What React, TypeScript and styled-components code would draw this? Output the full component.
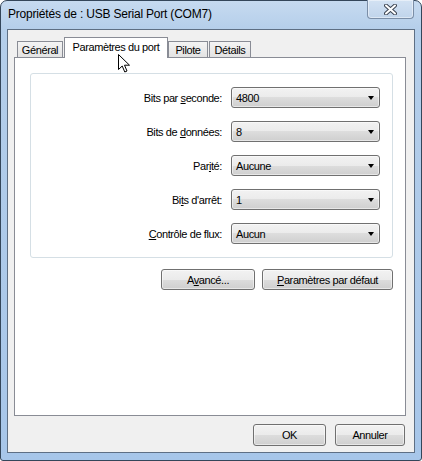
import React from "react";
import styled, { createGlobalStyle } from "styled-components";

const GlobalStyle = createGlobalStyle`
  html, body {
    margin: 0;
    padding: 0;
    background: #ffffff;
  }
  body {
    font-family: "Liberation Sans", Arial, sans-serif;
    font-size: 11px;
    color: #000000;
  }
  * {
    box-sizing: border-box;
  }
`;

const Window = styled.div`
  position: relative;
  width: 422px;
  height: 461px;
  display: flex;
  flex-direction: column;
  padding: 0 6px 7px 6px;
  border: 1px solid #34465a;
  border-radius: 7px 7px 3px 3px;
  background: linear-gradient(#c6daf0, #b4ceea 30px, #a7c6e9);
`;

const TitleBar = styled.div`
  height: 28px;
  display: flex;
  align-items: flex-start;
`;

const Caption = styled.span`
  margin: 6px 0 0 1px;
  font-size: 12px;
  line-height: 14px;
  letter-spacing: -0.2px;
  color: #000000;
`;

const CloseButton = styled.div`
  margin: -1px 1px 0 auto;
  width: 47px;
  height: 19px;
  display: flex;
  align-items: center;
  justify-content: center;
  border: 1px solid #7b8ea7;
  border-top: none;
  border-radius: 0 0 4px 4px;
  background: linear-gradient(#d3e2f3, #c0d4eb);
  box-shadow: inset 0 0 0 1px rgba(255, 255, 255, 0.45);
`;

const Client = styled.div`
  flex: 1;
  display: flex;
  flex-direction: column;
  border: 1px solid #5e6f84;
  background: #f0f0f0;
  padding: 7px 8px 6px 6px;
`;

const TabStrip = styled.div`
  height: 20px;
  display: flex;
  align-items: flex-end;
  padding-left: 3px;
`;

const Tab = styled.div<{ $active?: boolean; $w: number }>`
  position: relative;
  width: ${({ $w }) => $w}px;
  height: ${({ $active }) => ($active ? "21px" : "16px")};
  margin-bottom: ${({ $active }) => ($active ? "-1px" : "0")};
  margin-right: ${({ $active }) => ($active ? "0" : "1px")};
  padding-bottom: ${({ $active }) => ($active ? "3px" : "0")};
  display: flex;
  align-items: center;
  justify-content: center;
  border: 1px solid #898c95;
  border-bottom: none;
  background: ${({ $active }) =>
    $active ? "#ffffff" : "linear-gradient(#f4f4f4, #e3e3e3)"};
  z-index: ${({ $active }) => ($active ? 1 : 0)};
  letter-spacing: -0.4px;
  white-space: nowrap;
`;

const Panel = styled.div`
  flex: 1;
  display: flex;
  flex-direction: column;
  border: 1px solid #898c95;
  background: #ffffff;
  padding: 15px 12px 0 15px;
`;

const GroupBox = styled.div`
  display: grid;
  grid-template-columns: 1fr 149px;
  column-gap: 9px;
  row-gap: 13px;
  align-items: center;
  padding: 13px 12px 13px 0;
  border: 1px solid #d5dfe5;
  border-radius: 3px;
`;

const Label = styled.label`
  text-align: right;
  letter-spacing: -0.4px;
  white-space: nowrap;
`;

const Key = styled.span`
  text-decoration: underline;
`;

const Combo = styled.div`
  height: 21px;
  display: flex;
  align-items: center;
  justify-content: space-between;
  padding: 0 5px 0 4px;
  border: 1px solid #707070;
  border-radius: 3px;
  background: linear-gradient(#f2f2f2 0%, #ebebeb 50%, #dddddd 50%, #cfcfcf 100%);
  box-shadow: inset 0 0 0 1px rgba(255, 255, 255, 0.5);
  letter-spacing: -0.4px;
`;

const Arrow = styled.span`
  width: 1px;
  height: 0;
  margin-top: 1px;
  border-left: 3px solid transparent;
  border-right: 3px solid transparent;
  border-top: 4px solid #000000;
`;

const ButtonRow = styled.div<{ $top: number; $gap: number; $right: number }>`
  display: flex;
  justify-content: flex-end;
  gap: ${({ $gap }) => $gap}px;
  margin-top: ${({ $top }) => $top}px;
  padding-right: ${({ $right }) => $right}px;
`;

const Button = styled.button<{ $w: number; $h: number }>`
  width: ${({ $w }) => $w}px;
  height: ${({ $h }) => $h}px;
  padding: 0;
  border: 1px solid #707070;
  border-radius: 3px;
  background: linear-gradient(#f2f2f2 0%, #ebebeb 50%, #dddddd 50%, #cfcfcf 100%);
  box-shadow: inset 0 0 0 1px rgba(255, 255, 255, 0.5);
  font-family: inherit;
  font-size: 11px;
  letter-spacing: -0.4px;
  color: #000000;
`;

const Pointer = styled.svg`
  position: absolute;
  left: 117px;
  top: 53px;
  z-index: 5;
`;

const fields = [
  { label: <>Bits par <Key>s</Key>econde:</>, value: "4800" },
  { label: <>Bits de <Key>d</Key>onnées:</>, value: "8" },
  { label: <>Par<Key>i</Key>té:</>, value: "Aucune" },
  { label: <>Bi<Key>t</Key>s d'arrêt:</>, value: "1" },
  { label: <><Key>C</Key>ontrôle de flux:</>, value: "Aucun" },
];

const App = () => {
  return (
    <>
      <GlobalStyle />
      <Window>
        <TitleBar>
          <Caption>Propriétés de : USB Serial Port (COM7)</Caption>
          <CloseButton>
            <svg width="13" height="11" viewBox="0 0 13 11">
              <path d="M2 1.5 L11 9.5 M11 1.5 L2 9.5" stroke="#3c4452" strokeWidth="4" strokeLinecap="round" />
              <path d="M2 1.5 L11 9.5 M11 1.5 L2 9.5" stroke="#ffffff" strokeWidth="2" strokeLinecap="round" />
            </svg>
          </CloseButton>
        </TitleBar>
        <Client>
          <TabStrip>
            <Tab $w={46}>Général</Tab>
            <Tab $w={104} $active>Paramètres du port</Tab>
            <Tab $w={40}>Pilote</Tab>
            <Tab $w={42}>Détails</Tab>
          </TabStrip>
          <Panel>
            <GroupBox>
              {fields.map((f, i) => (
                <React.Fragment key={i}>
                  <Label>{f.label}</Label>
                  <Combo>
                    <span>{f.value}</span>
                    <Arrow />
                  </Combo>
                </React.Fragment>
              ))}
            </GroupBox>
            <ButtonRow $top={11} $gap={7} $right={0}>
              <Button $w={94} $h={21}>
                A<Key>v</Key>ancé...
              </Button>
              <Button $w={131} $h={21}>
                <Key>P</Key>aramètres par défaut
              </Button>
            </ButtonRow>
          </Panel>
          <ButtonRow $top={8} $gap={9} $right={1}>
            <Button $w={73} $h={22}>OK</Button>
            <Button $w={70} $h={22}>Annuler</Button>
          </ButtonRow>
        </Client>
        <Pointer width="13" height="20" viewBox="0 0 13 20">
          <path
            d="M0.5 0.5 L0.5 15.5 L4.2 12 L6.8 18 L9 17 L6.5 11.2 L11.5 11.2 Z"
            fill="#ffffff"
            stroke="#000000"
            strokeWidth="1"
            strokeLinejoin="miter"
          />
        </Pointer>
      </Window>
    </>
  );
};

export default App;
